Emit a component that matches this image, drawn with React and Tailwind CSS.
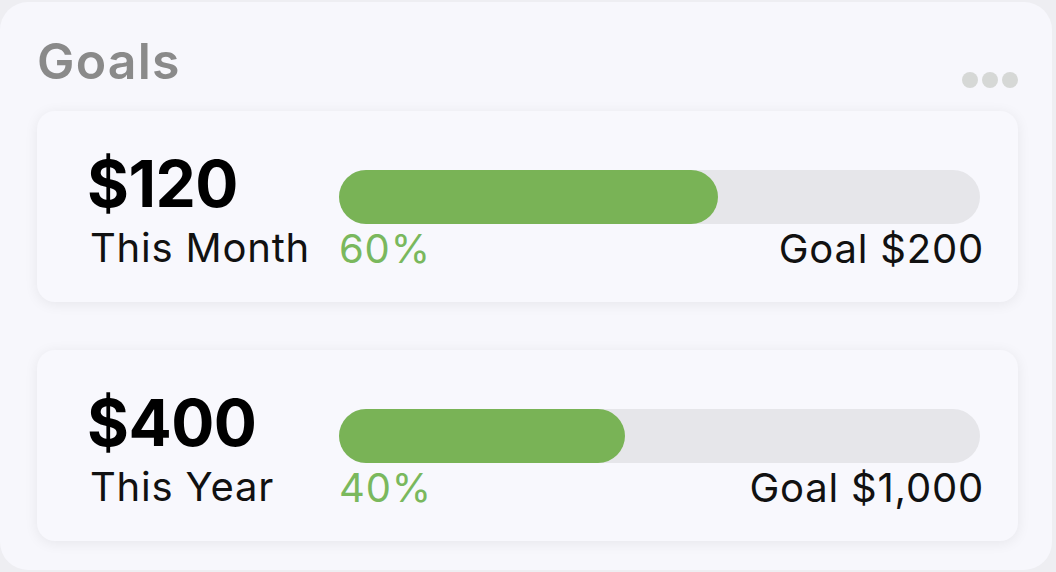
import React from "react";

const goals = [
  { amount: "$120", label: "This Month", pct: 60, fill: 59.2, goal: "Goal $200" },
  { amount: "$400", label: "This Year", pct: 40, fill: 44.6, goal: "Goal $1,000" },
];

const GoalCard = ({ goal }) => (
  <div className="flex h-[191px] rounded-[18px] bg-[#f8f8fd] pl-[50px] pr-[38px] shadow-[0_2px_14px_rgba(0,0,0,0.07)]">
    {/* montant */}
    <div className="w-[252px] shrink-0 pt-[41px]">
      <div className="text-[64px] font-bold leading-none tracking-[-0.5px] text-black">{goal.amount}</div>
      <div className="mt-[12px] pl-[3px] text-[40px] leading-none tracking-[0.8px] text-[#111]">{goal.label}</div>
    </div>
    {/* barre */}
    <div className="flex-1 pt-[59px]">
      <div className="h-[54px] w-full rounded-full bg-[#e6e6ea]">
        <div className="h-full rounded-full bg-[#79b356]" style={{ width: `${goal.fill}%` }} />
      </div>
      <div className="mt-[5px] mr-[-4px] flex justify-between text-[40px] leading-none tracking-[0.8px]">
        <span className="text-[#7ab85d]">{goal.pct}%</span>
        <span className="text-[#111]">{goal.goal}</span>
      </div>
    </div>
  </div>
);

export default function App() {
  return (
    <div
      className="h-[572px] w-[1056px] bg-[#eeeef2] pt-[2px] pr-[4px] pb-[2px]"
      style={{ fontFamily: "Inter, 'Noto Sans', sans-serif" }}
    >
      <div className="h-full rounded-[28px] bg-[#f7f7fc] pl-[37px] pr-[34px]">
        <div className="flex items-start justify-between pt-[34px]">
          <h2 className="text-[50px] font-semibold leading-none tracking-[1.2px] text-[#8a8a8a]">Goals</h2>
          <div className="mt-[36px] flex gap-[4px]">
            <span className="h-[16px] w-[16px] rounded-full bg-[#d6d8d6]" />
            <span className="h-[16px] w-[16px] rounded-full bg-[#d6d8d6]" />
            <span className="h-[16px] w-[16px] rounded-full bg-[#d6d8d6]" />
          </div>
        </div>
        <div className="mt-[23px] flex flex-col gap-[48px]">
          {goals.map((g) => (
            <GoalCard key={g.label} goal={g} />
          ))}
        </div>
      </div>
    </div>
  );
}
